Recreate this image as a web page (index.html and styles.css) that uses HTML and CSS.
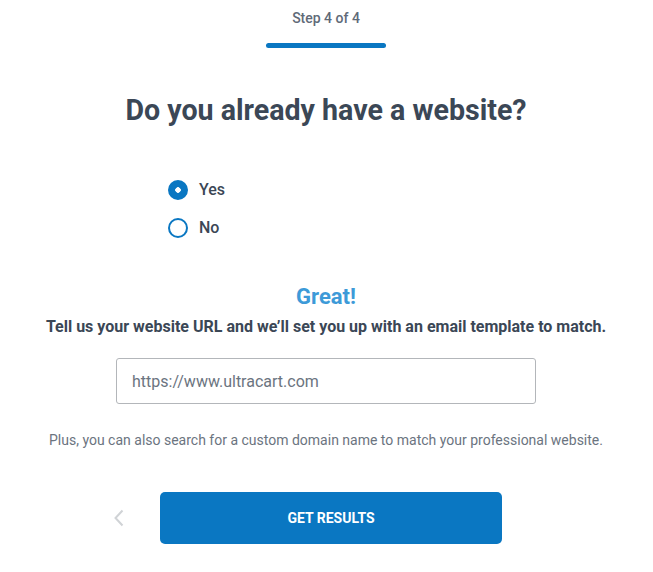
FILE: index.html
```html
<!DOCTYPE html>
<html lang="en">
<head>
    <meta charset="UTF-8">
    <meta name="viewport" content="width=device-width, initial-scale=1.0">
    <title>Website Setup</title>
    <link rel="stylesheet" href="styles.css">
</head>
<body>
    <div class="wizard">
        <!-- Progress -->
        <div class="step-label">Step 4 of 4</div>
        <div class="step-bar"></div>

        <h1>Do you already have a website?</h1>

        <!-- Yes / No choice -->
        <div class="choices">
            <label class="choice">
                <input type="radio" name="hasSite" value="yes" checked>
                <span class="dot"></span>
                <span>Yes</span>
            </label>
            <label class="choice">
                <input type="radio" name="hasSite" value="no">
                <span class="dot"></span>
                <span>No</span>
            </label>
        </div>

        <h2>Great!</h2>
        <p class="lead">Tell us your website URL and we&rsquo;ll set you up with an email template to match.</p>

        <input type="text" class="url-input" id="siteUrl" placeholder="https://www.ultracart.com">

        <p class="note">Plus, you can also search for a custom domain name to match your professional website.</p>

        <div class="actions">
            <a href="#" class="back">
                <svg width="12" height="18" viewBox="0 0 12 18"><path d="M9.5 1.5 L2.5 9 L9.5 16.5" fill="none" stroke="#d0d3d6" stroke-width="2"/></svg>
            </a>
            <button class="submit">GET RESULTS</button>
        </div>
    </div>
</body>
</html>
```

FILE: styles.css
```css
body {
    font-family: Roboto, "Liberation Sans", sans-serif;
    margin: 0;
    padding: 0;
    background-color: #fff;
    color: #3b4756;
}

.wizard {
    width: 652px;
    display: flex;
    flex-direction: column;
    align-items: center;
}

.step-label {
    margin-top: 10px;
    font-size: 14px;
    font-weight: 500;
    color: #5f6a78;
    line-height: 17px;
}

.step-bar {
    width: 120px;
    height: 5px;
    margin-top: 16px;
    border-radius: 3px;
    background-color: #0a77c2;
}

h1 {
    margin: 45px 0 0;
    font-size: 28.6px;
    font-weight: 700;
    line-height: 34px;
    color: #3b4756;
}

.choices {
    align-self: flex-start;
    margin: 53px 0 0 168px;
    display: flex;
    flex-direction: column;
    gap: 18px;
}

.choice {
    display: flex;
    align-items: center;
    gap: 11px;
    font-size: 16px;
    font-weight: 500;
    line-height: 20px;
    cursor: pointer;
}

.choice input {
    display: none;
}

.choice .dot {
    width: 16px;
    height: 16px;
    border: 2px solid #0a77c2;
    border-radius: 50%;
    box-sizing: content-box;
    background-color: #fff;
}

.choice input:checked + .dot {
    background: radial-gradient(circle, #fff 0 2.5px, #0a77c2 3px);
}

h2 {
    margin: 46px 0 0;
    font-size: 22px;
    font-weight: 700;
    line-height: 26px;
    color: #3d9ad8;
}

.lead {
    margin: 7px 0 0;
    font-size: 16px;
    font-weight: 700;
    line-height: 20px;
}

.url-input {
    width: 420px;
    height: 46px;
    margin-top: 21px;
    box-sizing: border-box;
    padding: 0 15px;
    font-family: inherit;
    font-size: 16px;
    color: #3b4756;
    border: 1px solid #b3b6ba;
    border-radius: 3px;
}

.url-input::placeholder {
    color: #6b7480;
}

.note {
    margin: 27px 0 0;
    font-size: 14px;
    line-height: 18px;
    color: #6b7480;
}

.actions {
    width: 420px;
    margin-top: 43px;
    display: flex;
    align-items: center;
}

.back {
    width: 47px;
    margin-left: -3px;
    display: flex;
    justify-content: flex-start;
}

.submit {
    width: 342px;
    height: 52px;
    font-family: inherit;
    font-size: 14px;
    font-weight: 700;
    color: #fff;
    background-color: #0a77c2;
    border: none;
    border-radius: 5px;
    cursor: pointer;
}

.submit:hover {
    background-color: #0866a8;
}
```
